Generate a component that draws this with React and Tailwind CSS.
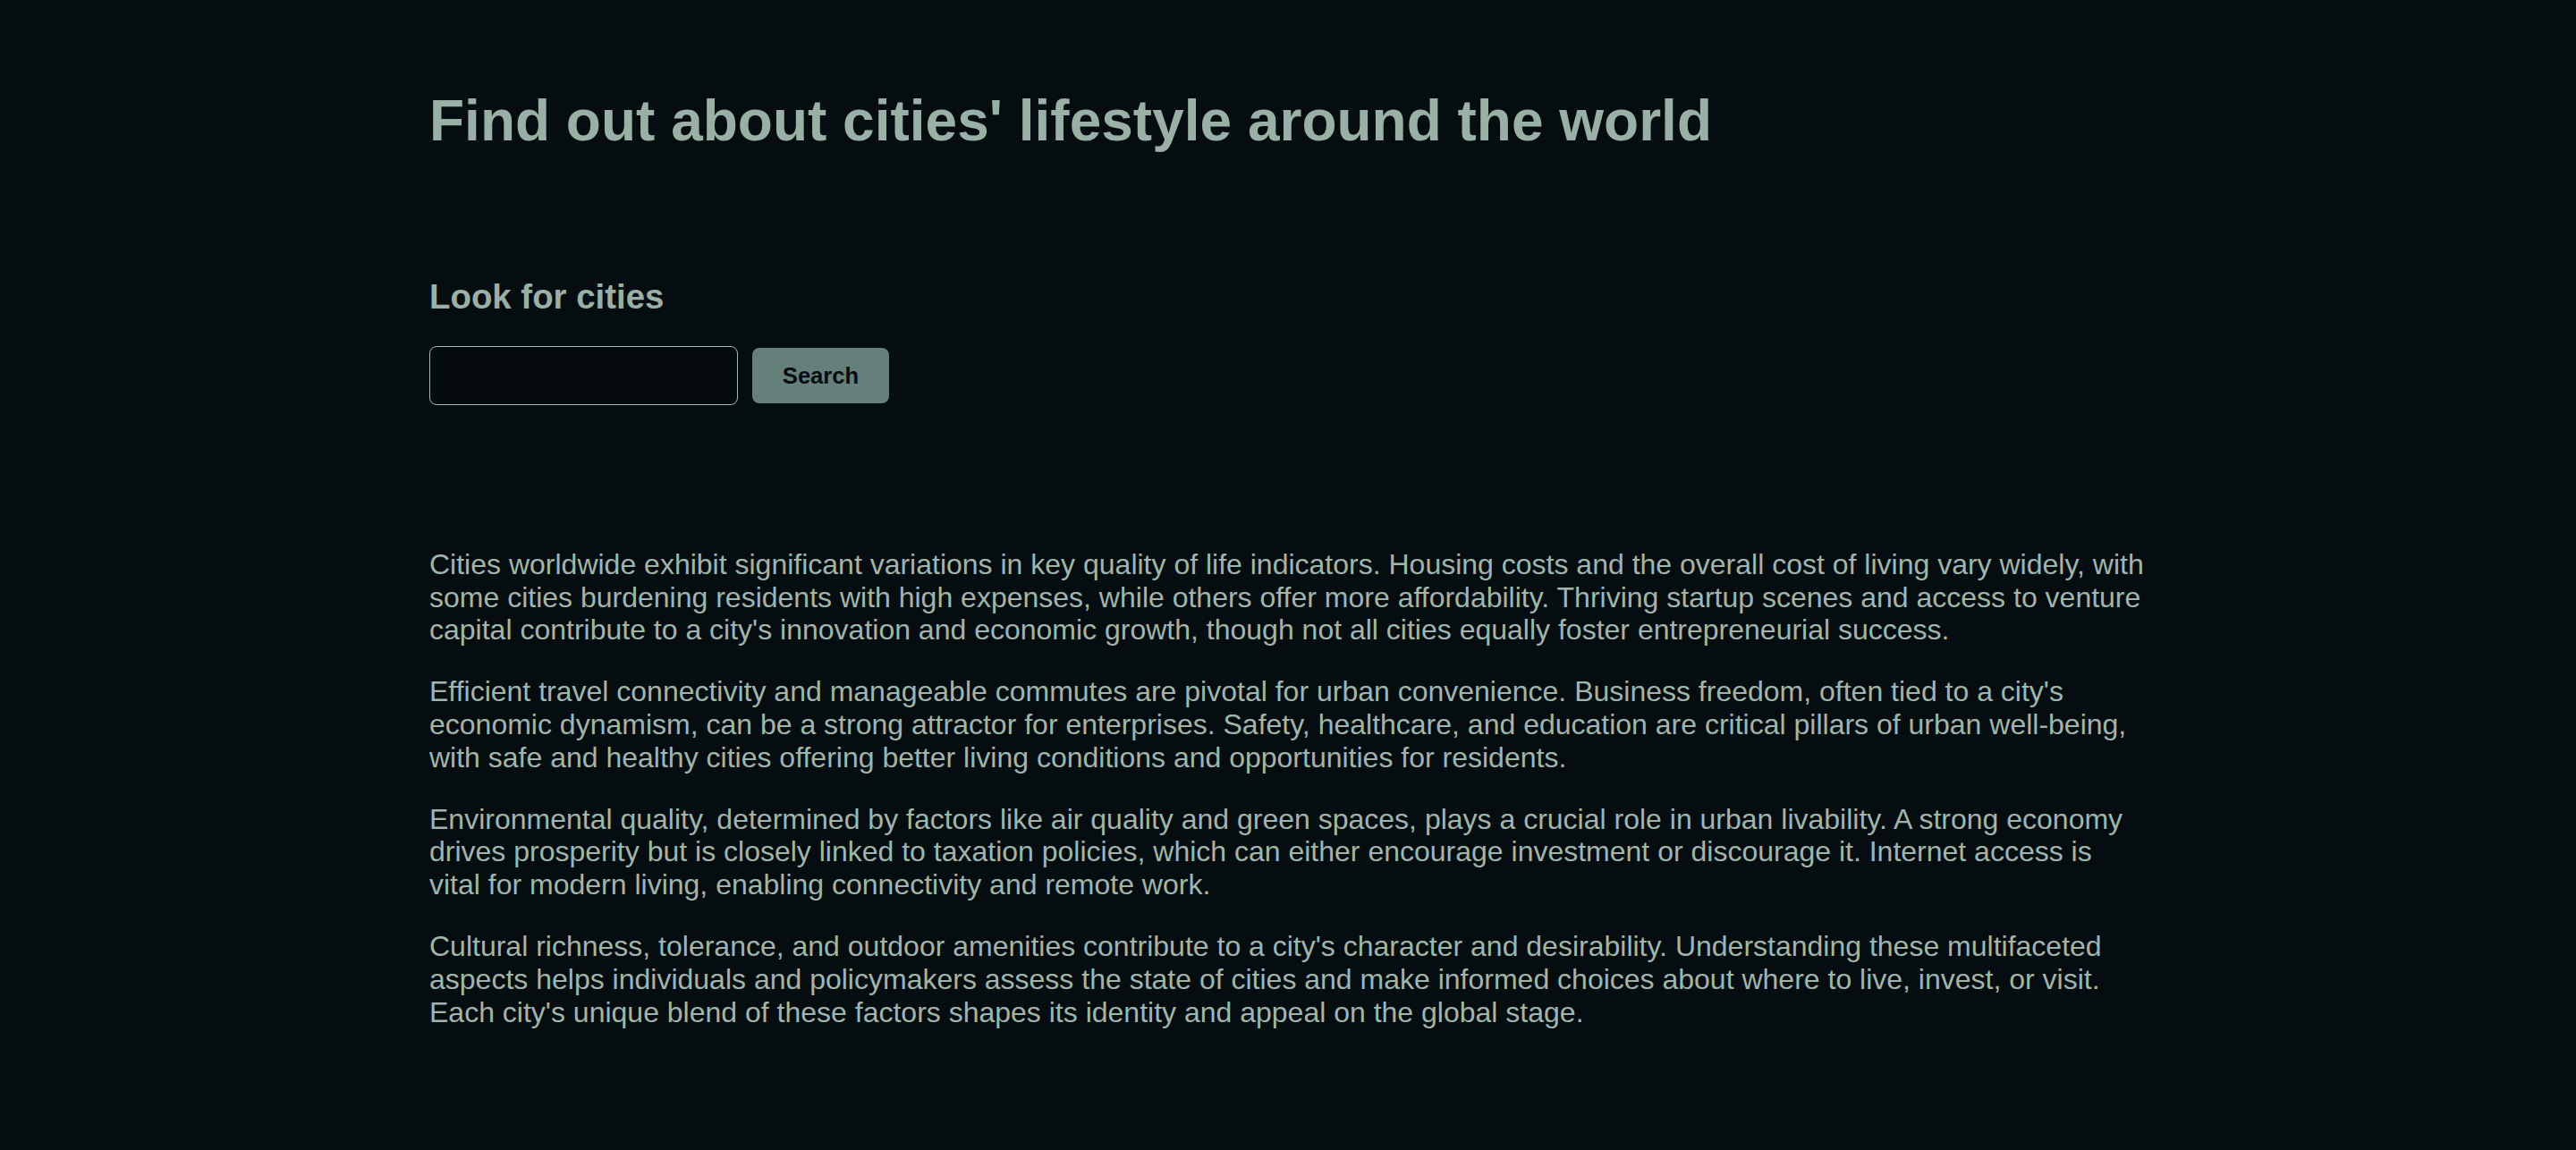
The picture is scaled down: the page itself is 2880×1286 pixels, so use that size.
import React, { useState } from "react";

const paragraphs = [
  "Cities worldwide exhibit significant variations in key quality of life indicators. Housing costs and the overall cost of living vary widely, with some cities burdening residents with high expenses, while others offer more affordability. Thriving startup scenes and access to venture capital contribute to a city's innovation and economic growth, though not all cities equally foster entrepreneurial success.",
  "Efficient travel connectivity and manageable commutes are pivotal for urban convenience. Business freedom, often tied to a city's economic dynamism, can be a strong attractor for enterprises. Safety, healthcare, and education are critical pillars of urban well-being, with safe and healthy cities offering better living conditions and opportunities for residents.",
  "Environmental quality, determined by factors like air quality and green spaces, plays a crucial role in urban livability. A strong economy drives prosperity but is closely linked to taxation policies, which can either encourage investment or discourage it. Internet access is vital for modern living, enabling connectivity and remote work.",
  "Cultural richness, tolerance, and outdoor amenities contribute to a city's character and desirability. Understanding these multifaceted aspects helps individuals and policymakers assess the state of cities and make informed choices about where to live, invest, or visit. Each city's unique blend of these factors shapes its identity and appeal on the global stage.",
];

export default function App() {
  const [query, setQuery] = useState("");

  return (
    <div className="min-h-screen bg-[#060d11] font-['Liberation_Sans',Arial,sans-serif] text-[#a0b5ab]">
      <div className="mx-auto w-full max-w-[1920px] pt-[99px] pb-20">
        <h1 className="text-[64px] font-bold leading-[1.15] text-[#9aafa5]">
          Find out about cities' lifestyle around the world
        </h1>

        <section className="mt-[137px]">
          <h2 className="text-[38.4px] font-bold leading-[1.15] text-[#9aafa5]">
            Look for cities
          </h2>
          <div className="mt-[33px] flex items-center gap-[16px]">
            <input
              type="text"
              value={query}
              onChange={(e) => setQuery(e.target.value)}
              className="h-[66px] w-[345px] rounded-[8px] border-[1.5px] border-[#a3b8ae] bg-[#040a0d] px-4 text-[25.6px] text-[#9aafa5] outline-none"
            />
            <button className="h-[62px] w-[153px] rounded-[8px] bg-[#65807a] text-[25.6px] font-bold text-[#060d11]">
              Search
            </button>
          </div>
        </section>

        {/* intro text */}
        <div className="mt-[160px]">
          {paragraphs.map((p, i) => (
            <p key={i} className="mb-8 text-[32px] leading-[1.15]">
              {p}
            </p>
          ))}
        </div>
      </div>
    </div>
  );
}
